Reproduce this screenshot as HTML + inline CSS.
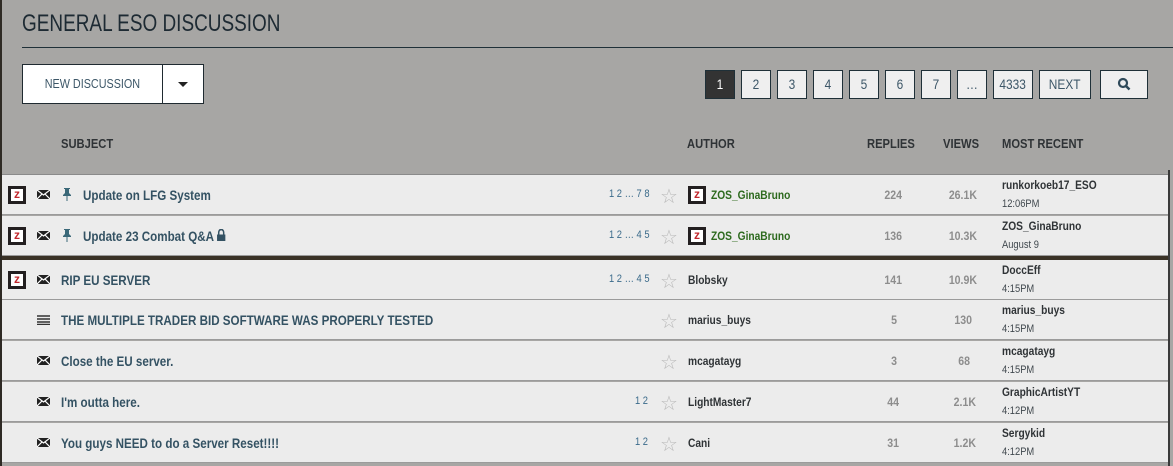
<!DOCTYPE html>
<html><head><style>
*{margin:0;padding:0;box-sizing:border-box}
body{width:1173px;height:466px;overflow:hidden;background:#a7a6a4;font-family:"Liberation Sans",sans-serif;position:relative}
.s{display:inline-block;transform:scaleX(.83);transform-origin:left center;white-space:nowrap}
.lb{position:absolute;left:0;top:0;width:2px;height:466px;background:#2e2a24}
.rb{position:absolute;left:1168px;top:170px;width:2px;height:296px;background:#3a3a3a}
h1{position:absolute;left:22px;top:10px;font-weight:normal;font-size:24px;color:#1d2a33;white-space:nowrap;transform:scaleX(.79);transform-origin:left}
.hr{position:absolute;left:22px;top:47px;width:1151px;height:1px;background:#1f3038}
.btn{position:absolute;top:64px;height:40px;background:#fff;border:1px solid #1f2a30}
.pg{position:absolute;top:70px;height:29px;background:#efefef;border:1px solid #1f3038;font-size:14px;color:#3d5768;text-align:center;line-height:27px}
.pg span{display:inline-block;transform:scaleX(.85)}
.th{position:absolute;top:136px;font-size:13px;font-weight:bold;color:#2f3336;transform:scaleX(.86);transform-origin:left;white-space:nowrap}
.row{position:absolute;left:2px;width:1166px;height:40px;background:#ececec;border-bottom:1px solid #9b9b9b}
.t{position:absolute;font-size:14px;font-weight:bold;color:#345263;top:12px;transform:scaleX(.83);transform-origin:left;white-space:nowrap}
.z{position:absolute;top:11px;width:18px;height:18px;background:#231f20;padding:3px}
.z div{width:12px;height:12px;background:#fff;color:#c1272d;font:bold 12px/11px "Liberation Sans",sans-serif;text-align:center}
.env{position:absolute;left:35px;top:15px}
.pages{position:absolute;top:13px;font-size:11px;color:#3a6a8a;transform:scaleX(.85);transform-origin:left;white-space:nowrap}
.star{position:absolute;left:658px;top:9px;font-size:20px;color:#b9b9b9}
.au{position:absolute;top:13px;font-size:12px;font-weight:bold;color:#2f3336;transform:scaleX(.85);transform-origin:left;white-space:nowrap}
.g{color:#2d6a1e}
.n{position:absolute;top:13px;font-size:12px;font-weight:bold;color:#8d8d8d;text-align:right;transform:scaleX(.88);transform-origin:right}
.mr{position:absolute;left:1000px;top:3px;font-size:12px;font-weight:bold;color:#2f3336;transform:scaleX(.85);transform-origin:left;white-space:nowrap}
.tm{position:absolute;left:1000px;top:23px;font-size:11px;color:#40484e;transform:scaleX(.85);transform-origin:left}
</style></head><body>
<div class="lb"></div>
<h1>GENERAL ESO DISCUSSION</h1>
<div class="hr"></div>
<div class="btn" style="left:22px;width:141px;font-size:13px;color:#3d5768;text-align:center;line-height:38px"><span class="s" style="transform-origin:center">NEW DISCUSSION</span></div>
<div class="btn" style="left:162px;width:42px"><div style="position:absolute;left:15px;top:17px;border-left:5px solid transparent;border-right:5px solid transparent;border-top:5px solid #222"></div></div>
<div class="pg" style="left:705px;width:30px;background:#333;color:#fff"><span>1</span></div>
<div class="pg" style="left:741px;width:30px"><span>2</span></div>
<div class="pg" style="left:777px;width:30px"><span>3</span></div>
<div class="pg" style="left:813px;width:30px"><span>4</span></div>
<div class="pg" style="left:849px;width:30px"><span>5</span></div>
<div class="pg" style="left:885px;width:30px"><span>6</span></div>
<div class="pg" style="left:921px;width:30px"><span>7</span></div>
<div class="pg" style="left:957px;width:30px"><span>…</span></div>
<div class="pg" style="left:993px;width:40px"><span>4333</span></div>
<div class="pg" style="left:1039px;width:52px"><span>NEXT</span></div>
<div class="pg" style="left:1100px;width:48px"><svg width="14" height="14" viewBox="0 0 14 14" style="margin-top:6px"><circle cx="6" cy="6" r="4" fill="none" stroke="#2f4a5a" stroke-width="2.2"/><line x1="9" y1="9" x2="12.5" y2="12.5" stroke="#2f4a5a" stroke-width="2.5"/></svg></div>
<div class="th" style="left:61px">SUBJECT</div>
<div class="th" style="left:687px">AUTHOR</div>
<div class="th" style="left:867px">REPLIES</div>
<div class="th" style="left:943px">VIEWS</div>
<div class="th" style="left:1002px">MOST RECENT</div>
<div style="position:absolute;left:2px;top:174px;width:1166px;height:1px;background:#8a8a8a"></div>

<div class="row" style="top:175px">
<div class="z" style="left:6px"><div>z</div></div>
<svg class="env" width="13" height="9"><rect width="13" height="9" fill="#222"/><path d="M0 0L6.5 5L13 0M0 9L5 4M13 9L8 4" stroke="#fff" stroke-width="1.2" fill="none"/></svg>
<svg style="position:absolute;left:60px;top:13px" width="10" height="13"><path d="M2 0h6v1h-1v4l2 2v1H1V7l2-2V1H2z M4.5 8h1v5h-1z" fill="#3a6878"/></svg>
<div class="t" style="left:81px">Update on LFG System</div>
<div class="pages" style="left:607px">1 2 … 7 8</div>
<div class="star">☆</div>
<div class="z" style="left:686px"><div>z</div></div>
<div class="au g" style="left:709px">ZOS_GinaBruno</div>
<div class="n" style="left:860px;width:40px">224</div>
<div class="n" style="left:930px;width:45px">26.1K</div>
<div class="mr">runkorkoeb17_ESO</div><div class="tm">12:06PM</div>
</div>

<div class="row" style="top:216px">
<div class="z" style="left:6px"><div>z</div></div>
<svg class="env" width="13" height="9"><rect width="13" height="9" fill="#222"/><path d="M0 0L6.5 5L13 0M0 9L5 4M13 9L8 4" stroke="#fff" stroke-width="1.2" fill="none"/></svg>
<svg style="position:absolute;left:60px;top:13px" width="10" height="13"><path d="M2 0h6v1h-1v4l2 2v1H1V7l2-2V1H2z M4.5 8h1v5h-1z" fill="#3a6878"/></svg>
<div class="t" style="left:81px">Update 23 Combat Q&amp;A <svg width="11" height="12"><path d="M2.5 5.5V3.5a3 3 0 0 1 6 0v2" stroke="#345263" stroke-width="1.8" fill="none"/><rect x="0.5" y="5.5" width="10" height="6.5" fill="#345263"/></svg></div>
<div class="pages" style="left:607px">1 2 … 4 5</div>
<div class="star">☆</div>
<div class="z" style="left:686px"><div>z</div></div>
<div class="au g" style="left:709px">ZOS_GinaBruno</div>
<div class="n" style="left:860px;width:40px">136</div>
<div class="n" style="left:930px;width:45px">10.3K</div>
<div class="mr g">ZOS_GinaBruno</div><div class="tm">August 9</div>
</div>
<div style="position:absolute;left:2px;top:256px;width:1166px;height:4px;background:#3a3226"></div>

<div class="row" style="top:260px">
<div class="z" style="left:6px"><div>z</div></div>
<svg class="env" width="13" height="9"><rect width="13" height="9" fill="#222"/><path d="M0 0L6.5 5L13 0M0 9L5 4M13 9L8 4" stroke="#fff" stroke-width="1.2" fill="none"/></svg>
<div class="t" style="left:59px">RIP EU SERVER</div>
<div class="pages" style="left:607px">1 2 … 4 5</div>
<div class="star">☆</div>
<div class="au" style="left:686px">Blobsky</div>
<div class="n" style="left:860px;width:40px">141</div>
<div class="n" style="left:930px;width:45px">10.9K</div>
<div class="mr">DoccEff</div><div class="tm">4:15PM</div>
</div>

<div class="row" style="top:300px">
<svg class="env" width="13" height="10"><path d="M0 1h13M0 4h13M0 7h13M0 9.5h13" stroke="#333" stroke-width="1.6"/></svg>
<div class="t" style="left:59px">THE MULTIPLE TRADER BID SOFTWARE WAS PROPERLY TESTED</div>
<div class="star">☆</div>
<div class="au" style="left:686px">marius_buys</div>
<div class="n" style="left:860px;width:35px">5</div>
<div class="n" style="left:930px;width:40px">130</div>
<div class="mr">marius_buys</div><div class="tm">4:15PM</div>
</div>

<div class="row" style="top:341px">
<svg class="env" width="13" height="9"><rect width="13" height="9" fill="#222"/><path d="M0 0L6.5 5L13 0M0 9L5 4M13 9L8 4" stroke="#fff" stroke-width="1.2" fill="none"/></svg>
<div class="t" style="left:59px">Close the EU server.</div>
<div class="star">☆</div>
<div class="au" style="left:686px">mcagatayg</div>
<div class="n" style="left:860px;width:35px">3</div>
<div class="n" style="left:930px;width:38px">68</div>
<div class="mr">mcagatayg</div><div class="tm">4:15PM</div>
</div>

<div class="row" style="top:382px">
<svg class="env" width="13" height="9"><rect width="13" height="9" fill="#222"/><path d="M0 0L6.5 5L13 0M0 9L5 4M13 9L8 4" stroke="#fff" stroke-width="1.2" fill="none"/></svg>
<div class="t" style="left:59px">I'm outta here.</div>
<div class="pages" style="left:633px">1 2</div>
<div class="star">☆</div>
<div class="au" style="left:686px">LightMaster7</div>
<div class="n" style="left:860px;width:37px">44</div>
<div class="n" style="left:930px;width:44px">2.1K</div>
<div class="mr">GraphicArtistYT</div><div class="tm">4:12PM</div>
</div>

<div class="row" style="top:423px">
<svg class="env" width="13" height="9"><rect width="13" height="9" fill="#222"/><path d="M0 0L6.5 5L13 0M0 9L5 4M13 9L8 4" stroke="#fff" stroke-width="1.2" fill="none"/></svg>
<div class="t" style="left:59px">You guys NEED to do a Server Reset!!!!</div>
<div class="pages" style="left:633px">1 2</div>
<div class="star">☆</div>
<div class="au" style="left:686px">Cani</div>
<div class="n" style="left:860px;width:37px">31</div>
<div class="n" style="left:930px;width:44px">1.2K</div>
<div class="mr">Sergykid</div><div class="tm">4:12PM</div>
</div>
<div class="rb"></div>
</body></html>
